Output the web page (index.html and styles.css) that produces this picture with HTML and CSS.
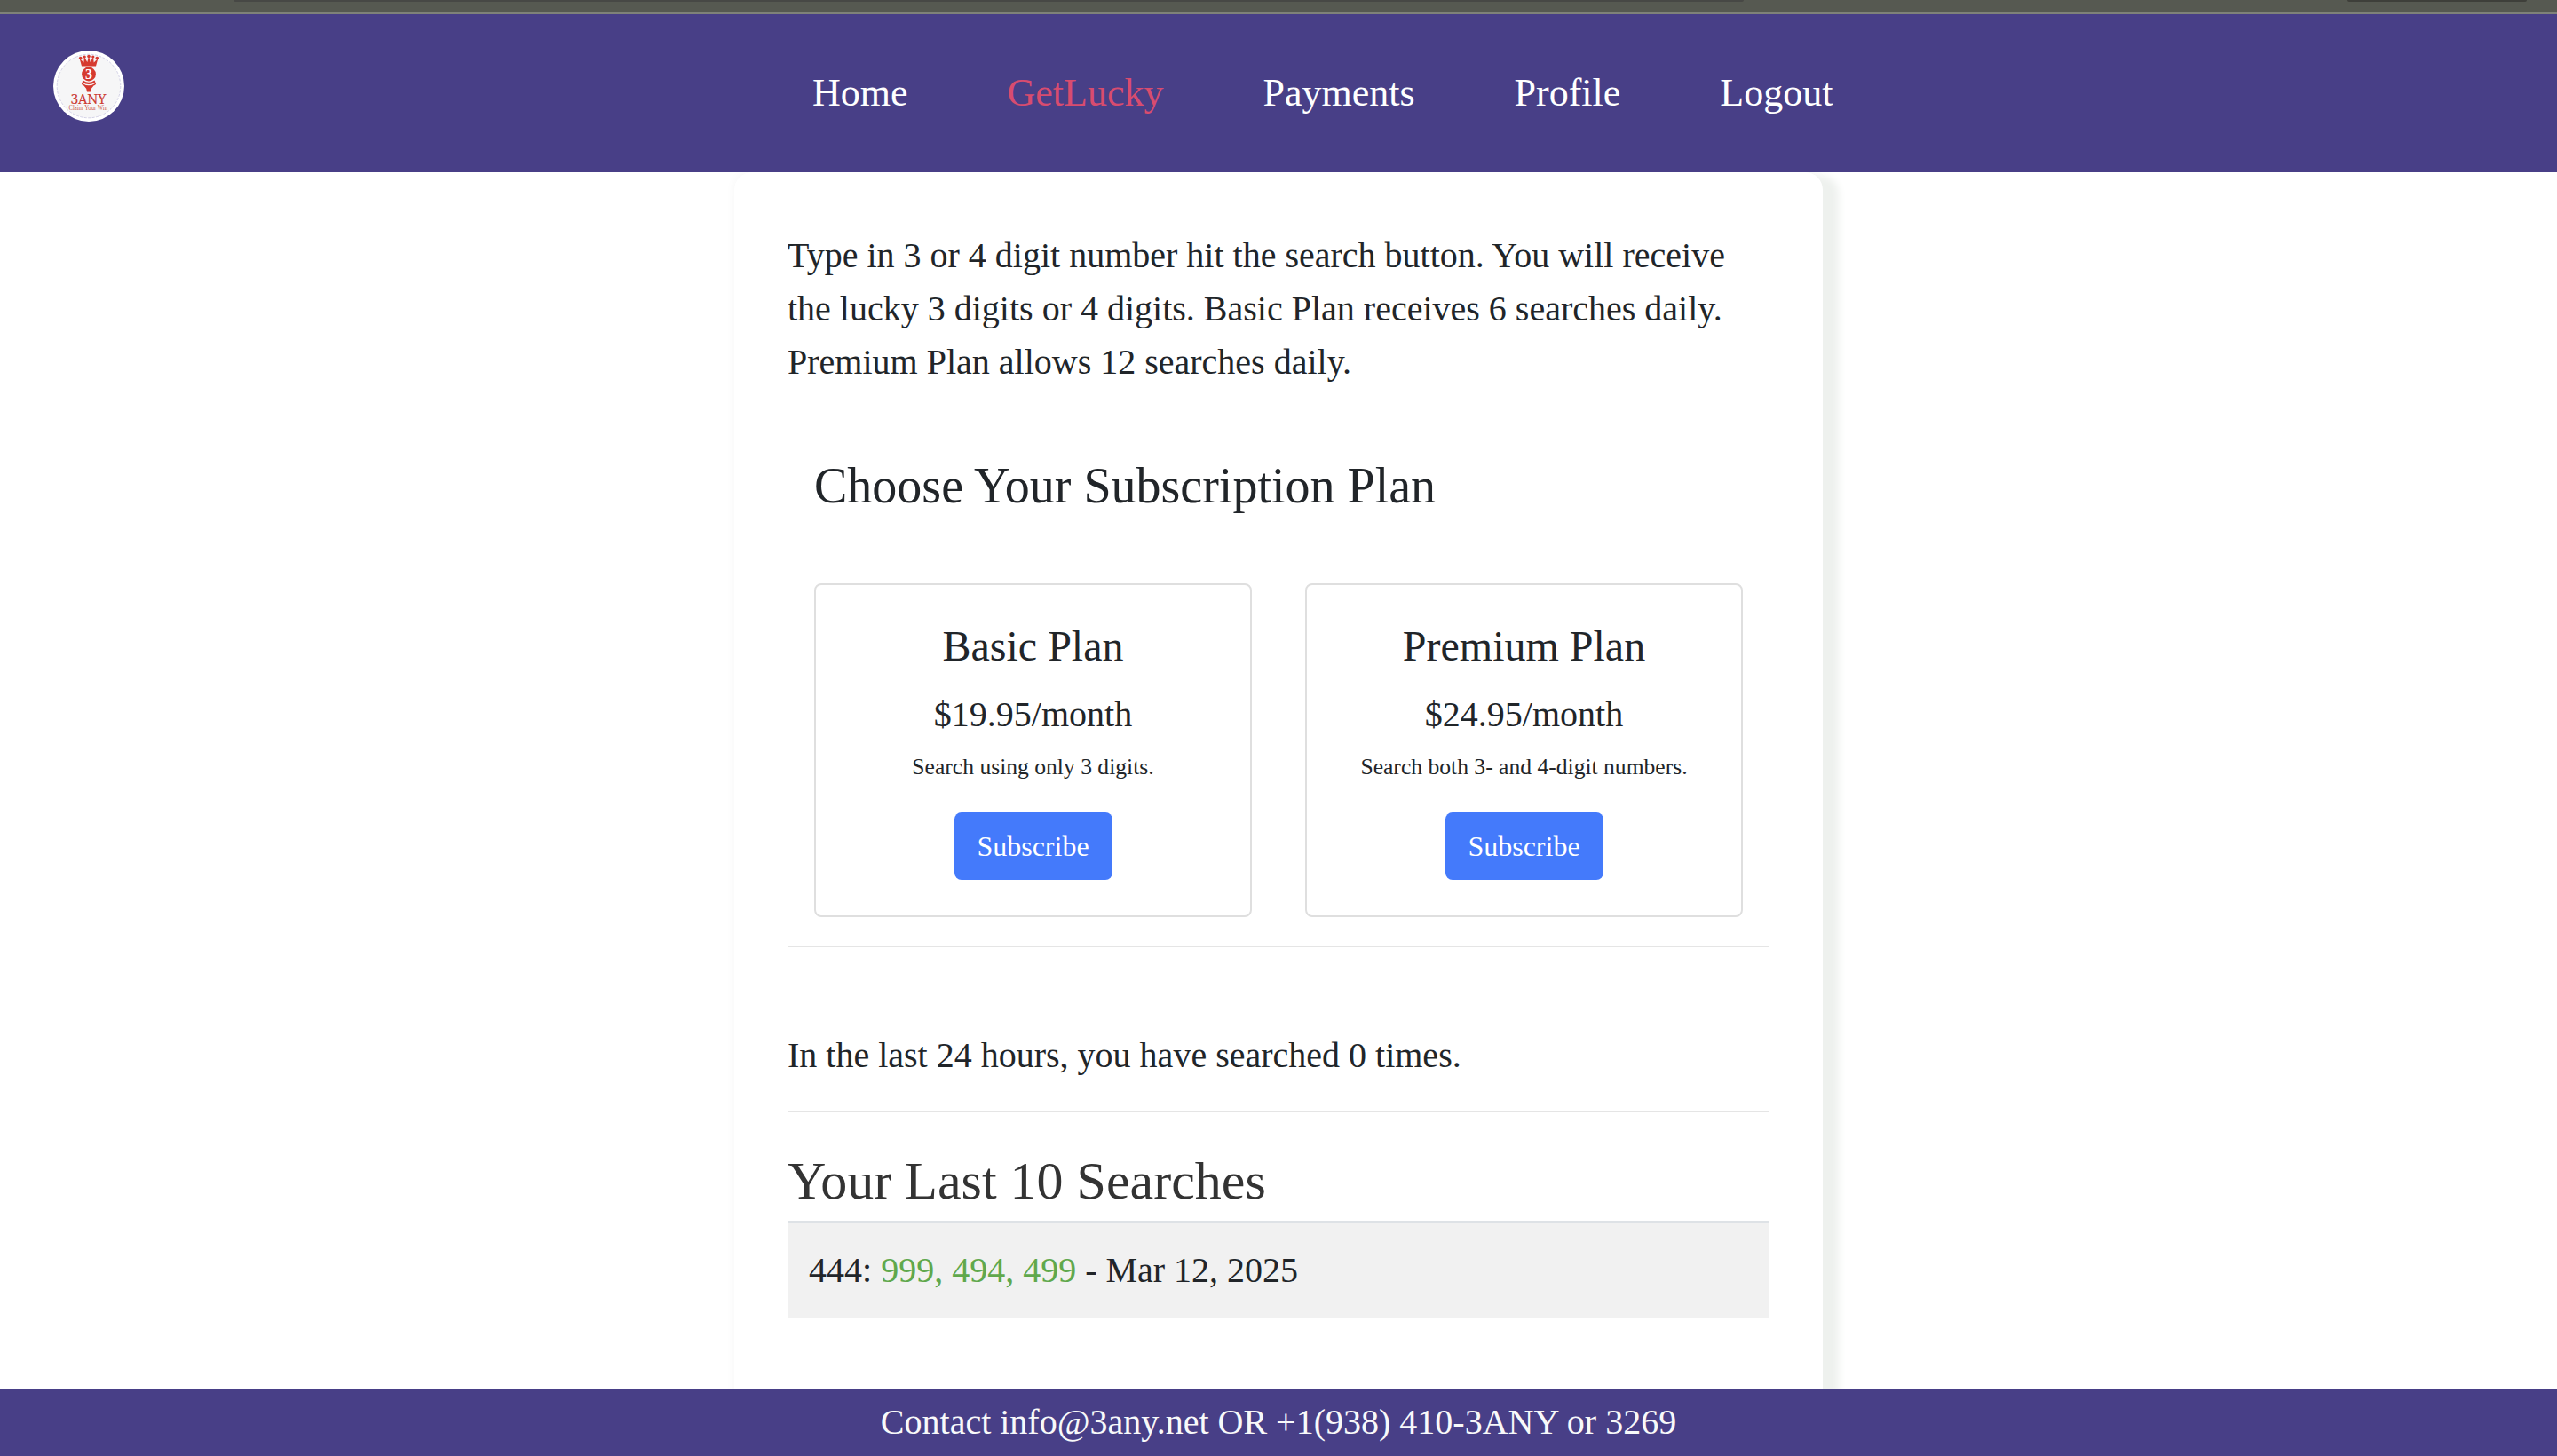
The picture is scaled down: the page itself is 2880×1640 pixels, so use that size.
FILE: index.html
```html
<!DOCTYPE html>
<html lang="en">
<head>
<meta charset="utf-8">
<title>3ANY - GetLucky</title>
<link rel="stylesheet" href="styles.css">
</head>
<body>
<div class="chrome"><span class="chrome-field"></span><span class="chrome-tools"></span></div>
<header class="navbar">
  <a class="brand" href="#">
    <svg class="logo" viewBox="0 0 80 80" width="80" height="80">
      <circle cx="40" cy="40" r="40" fill="#fff"/>
      <circle cx="40" cy="40" r="35.8" fill="#f6f6f7" stroke="#b9b5d6" stroke-width=".6" stroke-dasharray="3 1.5"/>
      <g fill="#d63a30">
        <path d="M32 17.5 29.5 8.500 34.300 13.500 35 7 38.300 13 40 6 41.700 13 45 7 45.700 13.500 50.500 8.500 48 17.500Z"/>
        <circle cx="30.700" cy="8.500" r="1.800"/><circle cx="35.200" cy="7" r="1.600"/><circle cx="40" cy="6.500" r="1.800"/><circle cx="44.800" cy="7" r="1.600"/><circle cx="49.300" cy="8.500" r="1.800"/>
        <circle cx="40" cy="26.500" r="7.900"/>
        <path d="M33.500 33.500Q40 38 46.500 33.500L47.500 35.500Q40 40.500 32.500 35.500ZM32 36.500Q40 42 48 36.500Q48.500 38.500 45.500 39.500Q42.500 42 42 46.500H38Q37.500 42 34.500 39.500Q31.500 38.500 32 36.500Z"/>
      </g>
      <text class="logo-num" x="40" y="31.800" text-anchor="middle">3</text>
      <text class="logo-name" x="19.500" y="60" textLength="40" lengthAdjust="spacingAndGlyphs">3ANY</text>
      <text class="logo-tag" x="17.500" y="66.500" textLength="43.500" lengthAdjust="spacingAndGlyphs">Claim Your Win</text>
    </svg>
  </a>
  <nav class="menu">
    <a href="#">Home</a><a class="active" href="#">GetLucky</a><a href="#">Payments</a><a href="#">Profile</a><a href="#">Logout</a>
  </nav>
</header>
<main class="page">
  <section class="panel">
    <p class="intro">Type in 3 or 4 digit number hit the search button. You will receive the lucky 3 digits or 4 digits. Basic Plan receives 6 searches daily. Premium Plan allows 12 searches daily.</p>
    <div class="plans">
      <h3 class="plans-title">Choose Your Subscription Plan</h3>
      <div class="plans-row">
        <article class="card">
          <h4>Basic Plan</h4>
          <h5>$19.95/month</h5>
          <p>Search using only 3 digits.</p>
          <button type="button">Subscribe</button>
        </article>
        <article class="card">
          <h4>Premium Plan</h4>
          <h5>$24.95/month</h5>
          <p>Search both 3- and 4-digit numbers.</p>
          <button type="button">Subscribe</button>
        </article>
      </div>
    </div>
    <hr>
    <p class="usage">In the last 24 hours, you have searched 0 times.</p>
    <hr>
    <h2 class="history-title">Your Last 10 Searches</h2>
    <div class="history-row">444: <span class="result">999, 494, 499</span> - Mar 12, 2025</div>
  </section>
</main>
<footer class="footer">Contact info@3any.net OR +1(938) 410-3ANY or 3269</footer>
</body>
</html>
```
FILE: styles.css
```css
* { box-sizing: border-box; }

body {
  margin: 0;
  height: 1640px;
  display: flex;
  flex-direction: column;
  overflow: hidden;
  background: #fff;
  color: #212529;
  font-family: "Liberation Serif", "Times New Roman", serif;
  font-size: 40px;
  line-height: 60px;
}

h2, h3, h4, h5, p { margin: 0; font-weight: 400; }
a { text-decoration: none; }

.chrome {
  flex: none;
  height: 16px;
  display: flex;
  padding-left: 263px;
  background: #565951;
  border-bottom: 2px solid #7f8279;
}
.chrome-field {
  width: 1701px;
  height: 2px;
  margin-right: 680px;
  border-radius: 0 0 8px 8px;
  background: #474845;
}
.chrome-tools {
  width: 202px;
  height: 2px;
  border-radius: 0 0 8px 8px;
  background: #3e3f3a;
}

.navbar {
  flex: none;
  position: relative;
  z-index: 1;
  height: 178px;
  display: flex;
  align-items: flex-start;
  padding: 41px 60px 0;
  background: #483f87;
}
.brand { display: flex; }
.logo { display: block; }
.logo-num { font: bold 16px "Liberation Serif", serif; fill: #fff; }
.logo-name { font: 15.5px "DejaVu Serif", serif; fill: #cc3a30; stroke: #cc3a30; stroke-width: .2px; }
.logo-tag { font: 7.4px "Liberation Serif", serif; fill: #c8564d; }

.menu {
  display: flex;
  gap: 112px;
  margin: 15px 0 0 775px;
  font-size: 44px;
  line-height: 66px;
}
.menu a { color: #fff; }
.menu .active { color: #d84c6f; }

.page {
  flex: 1;
  min-height: 0;
  display: flex;
  justify-content: center;
}
.panel {
  width: 1226px;
  height: 1500px;
  padding: 64px 60px 0;
  border-radius: 20px;
  background: #fff;
  box-shadow: 18px 4px 10px #eef1ee, 0 0 12px rgba(0, 0, 0, .04);
}

.plans { padding: 76px 30px 0; }
.plans-title { font-size: 56px; line-height: 67px; }
.plans-row { display: flex; gap: 60px; margin-top: 76px; }
.card {
  flex: 1;
  height: 376px;
  display: flex;
  flex-direction: column;
  align-items: center;
  padding-top: 40px;
  border: 2px solid #dfdfdf;
  border-radius: 8px;
}
.card h4 { font-size: 48px; line-height: 57.6px; }
.card h5 { margin-top: 24px; font-size: 40px; line-height: 48px; }
.card p { margin-top: 16px; font-size: 25.6px; line-height: 38.4px; }
.card button {
  width: 178px;
  height: 76px;
  margin-top: 32px;
  padding: 0;
  border: 0;
  border-radius: 8px;
  background: #447afb;
  color: #fff;
  font: 32px/48px "Liberation Serif", "Times New Roman", serif;
}

hr { height: 2px; margin: 32px 0; border: 0; background: #e5e5e5; }
.usage { margin-top: 92px; }
.history-title { margin-top: 41px; color: #333; font-size: 60px; line-height: 72px; }
.history-row {
  margin-top: 9px;
  padding: 24px;
  border-top: 2px solid #dee2e6;
  background: #f1f1f1;
}
.result { color: #60a84c; }

.footer {
  flex: none;
  position: relative;
  z-index: 1;
  height: 76px;
  padding: 8px 0;
  background: #483f87;
  color: #f8f9fa;
  text-align: center;
}
```
